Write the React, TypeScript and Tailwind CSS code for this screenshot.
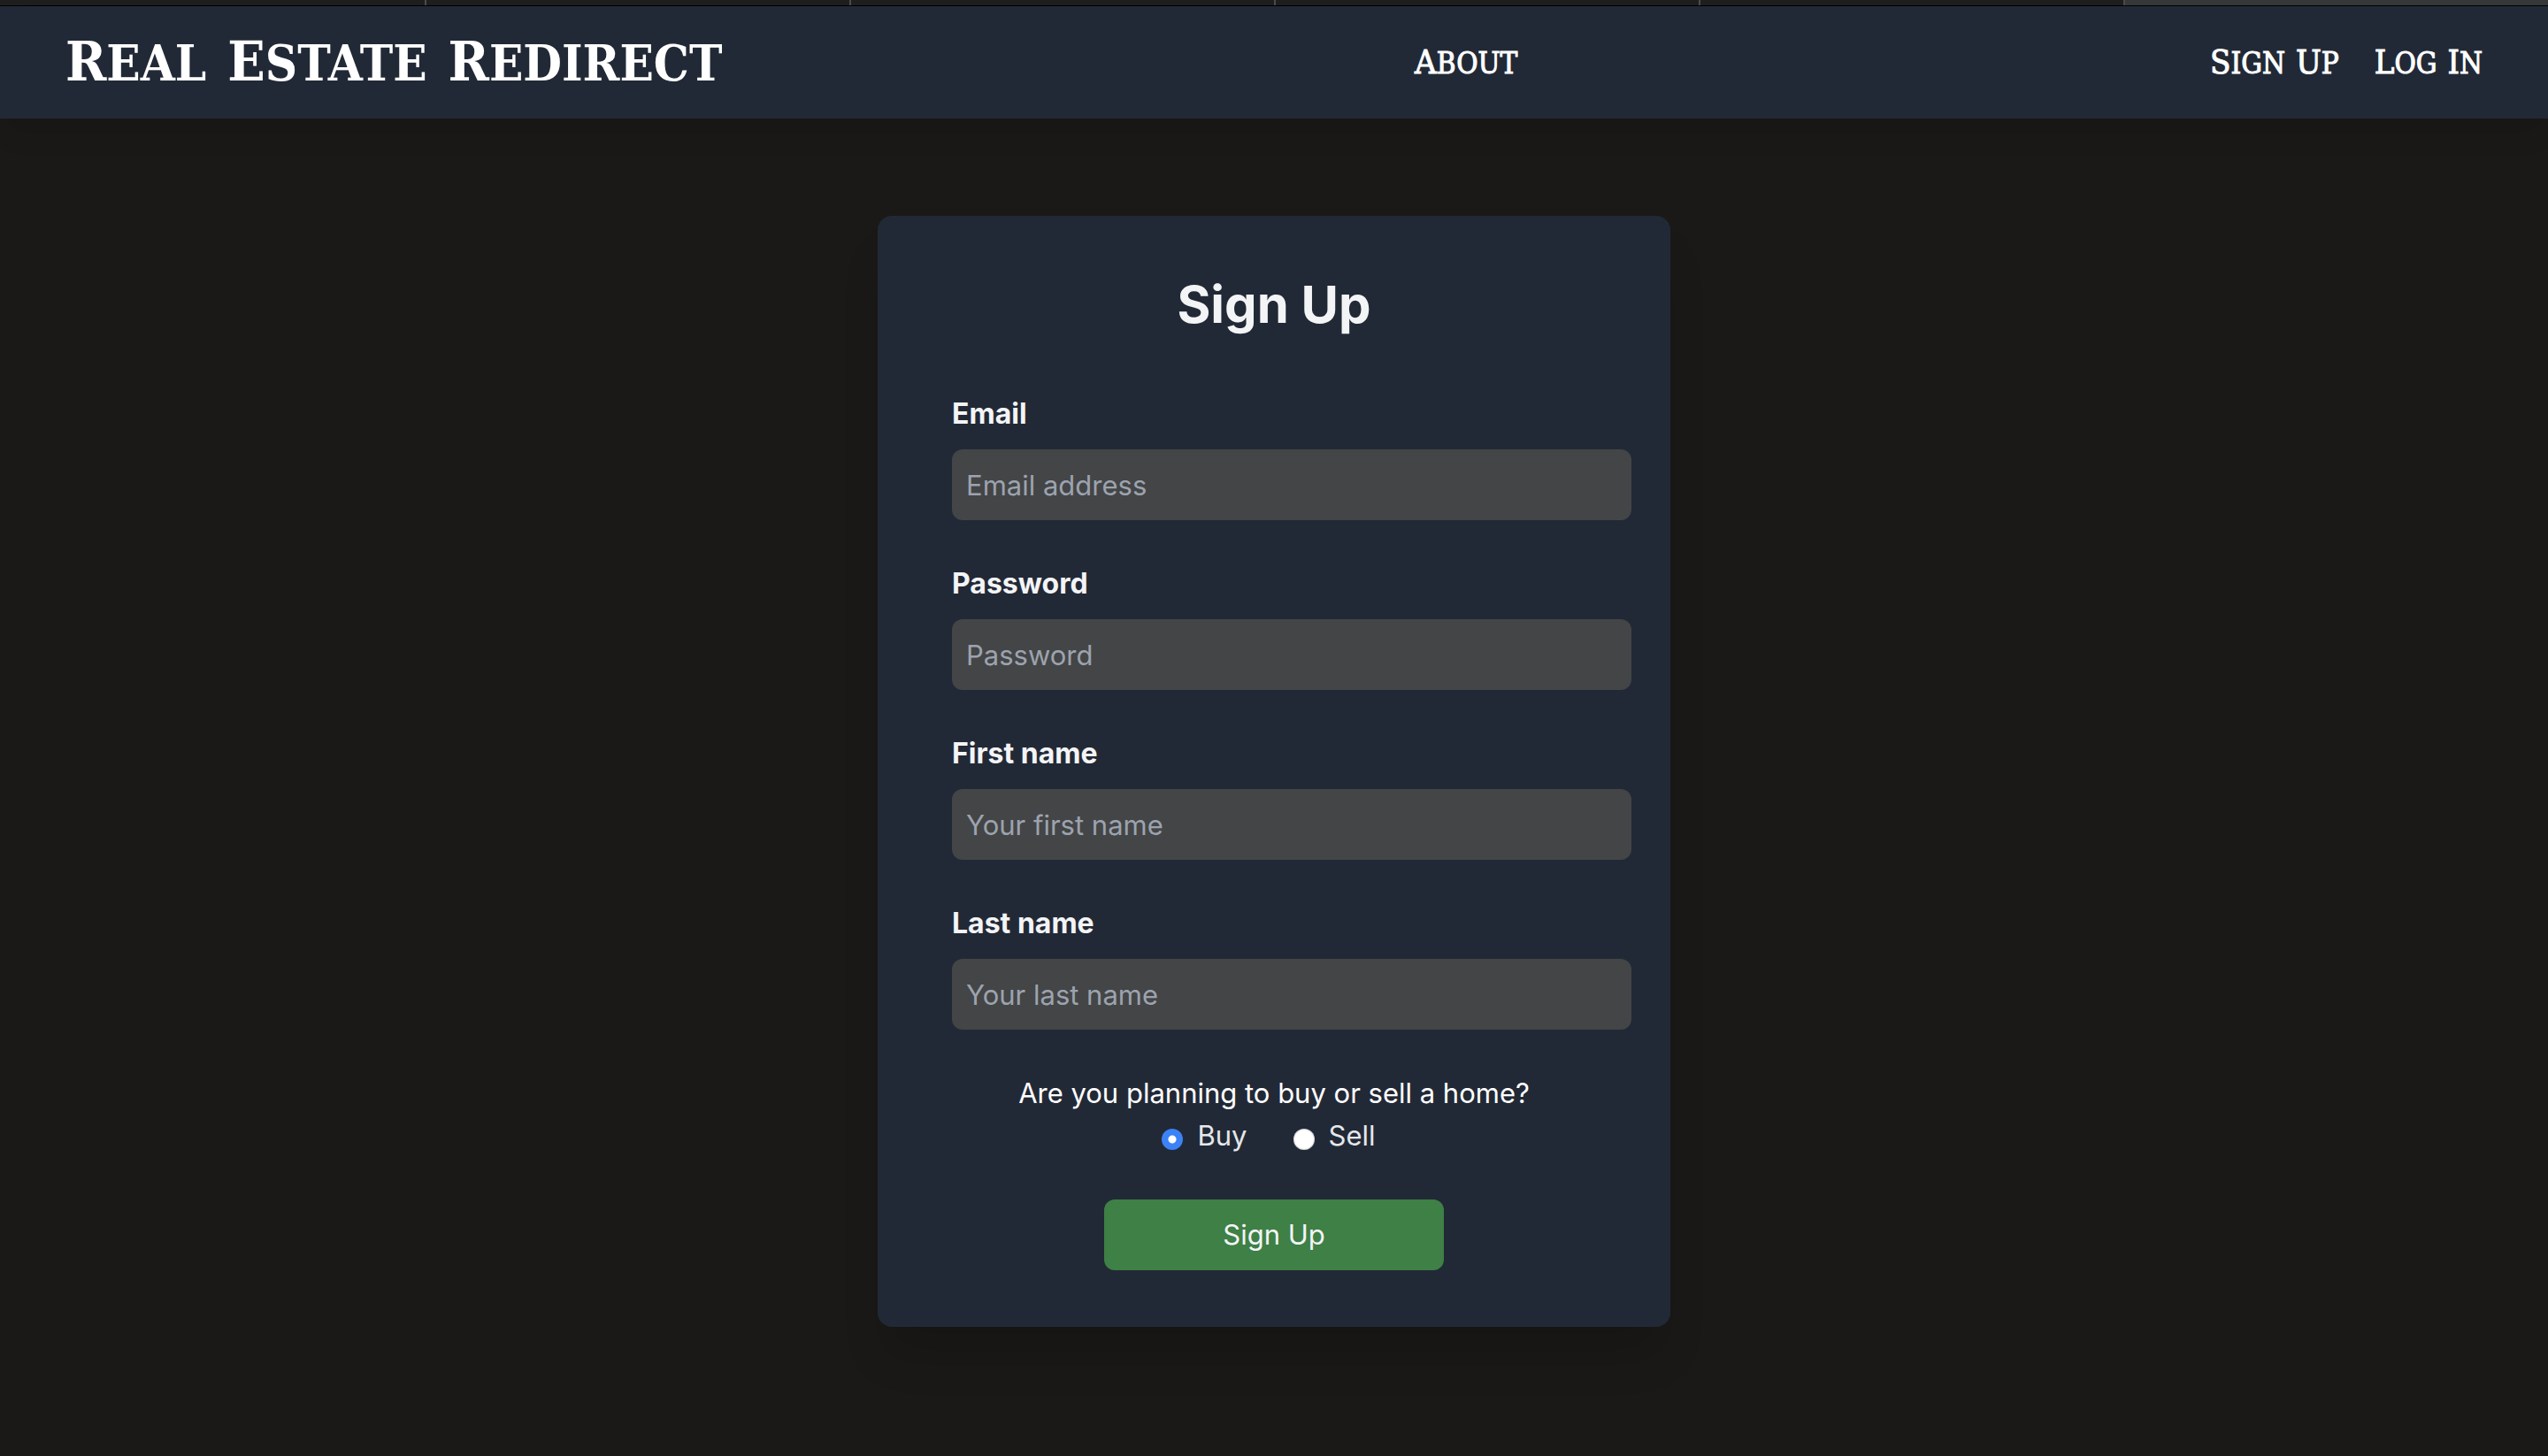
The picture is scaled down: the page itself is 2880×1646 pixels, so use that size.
import { useState } from "react";

const tabs = [0, 1, 2, 3, 4, 5];

const fields = [
  { id: "email", label: "Email", type: "email", placeholder: "Email address" },
  { id: "password", label: "Password", type: "password", placeholder: "Password" },
  { id: "first-name", label: "First name", type: "text", placeholder: "Your first name" },
  { id: "last-name", label: "Last name", type: "text", placeholder: "Your last name" },
];

const intents = [
  { value: "buy", label: "Buy" },
  { value: "sell", label: "Sell" },
];

function TabStrip() {
  return (
    <div className="grid h-[7px] grid-cols-6 border-b border-black bg-[#1e1e1e]">
      {tabs.map((tab) => (
        <div key={tab} className="border-l-2 border-[#4a4a4a] first:border-l-0 last:bg-[#363738]" />
      ))}
    </div>
  );
}

function NavLink({ text }: { text: string }) {
  return (
    <a href="#" className="flex gap-3 text-[33px] leading-[48px] uppercase [-webkit-text-stroke:1px_white]">
      {text.split(" ").map((word) => (
        <span key={word} className="block first-letter:text-[38px]">
          {word}
        </span>
      ))}
    </a>
  );
}

function Header() {
  return (
    <header className="flex h-[127px] items-center justify-between bg-[#222936] px-[74px] font-['DejaVu_Serif_Condensed','DejaVu_Serif',serif] text-white shadow-[0_20px_30px_-6px_rgb(0_0_0/0.1)]">
      <a href="#" className="flex gap-6 text-[56px] leading-[72px] font-bold uppercase">
        {["Real", "Estate", "Redirect"].map((word) => (
          <span key={word} className="block first-letter:text-[62px]">
            {word}
          </span>
        ))}
      </a>
      <NavLink text="About" />
      <nav className="flex gap-10">
        <NavLink text="Sign Up" />
        <NavLink text="Log In" />
      </nav>
    </header>
  );
}

function SignUpForm() {
  const [intent, setIntent] = useState("buy");
  return (
    <form className="w-full max-w-4xl rounded-2xl bg-[#222936] py-16 pr-11 pl-[84px] text-[31px] leading-[48px] text-gray-100 shadow-[0_40px_50px_-10px_rgb(0_0_0/0.15)]">
      <h1 className="mb-16 -ml-10 text-center text-[58px] leading-[72px] font-bold">Sign Up</h1>
      <div className="flex flex-col gap-12">
        {fields.map((field) => (
          <div key={field.id} className="flex flex-col gap-4">
            <label htmlFor={field.id} className="text-[32px] leading-[48px] font-bold">
              {field.label}
            </label>
            <input
              id={field.id}
              type={field.type}
              placeholder={field.placeholder}
              className="h-20 w-full rounded-xl bg-[#444546] px-4 placeholder:text-[#9ca3af]"
            />
          </div>
        ))}
      </div>
      <div className="mt-12 -ml-10 flex flex-col items-center">
        <fieldset className="flex flex-col items-center">
          <legend className="text-center text-white">Are you planning to buy or sell a home?</legend>
          <div className="flex gap-[52px] pr-3 text-gray-200">
            {intents.map((option) => (
              <label key={option.value} className="flex items-center gap-4">
                <input
                  type="radio"
                  name="intent"
                  value={option.value}
                  checked={intent === option.value}
                  onChange={() => setIntent(option.value)}
                  className="mt-2 size-6 appearance-none rounded-full bg-white shadow-[inset_0_0_2px_#777] checked:bg-[radial-gradient(circle,white_4px,#3b82f6_5px)] checked:shadow-none"
                />
                {option.label}
              </label>
            ))}
          </div>
        </fieldset>
        <button type="submit" className="mt-12 h-20 w-96 rounded-xl bg-[#3e8045]">
          Sign Up
        </button>
      </div>
    </form>
  );
}

export default function App() {
  return (
    <div className="min-h-screen bg-[#1a1917] font-['Inter',sans-serif]">
      <TabStrip />
      <Header />
      <main className="flex justify-center py-[110px]">
        <SignUpForm />
      </main>
    </div>
  );
}
